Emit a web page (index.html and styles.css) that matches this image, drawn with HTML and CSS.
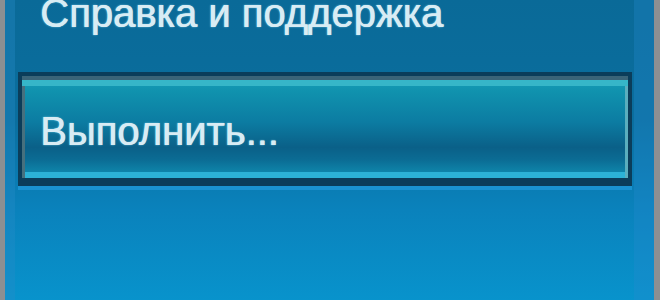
FILE: index.html
```html
<!DOCTYPE html>
<html lang="ru">
<head>
    <meta charset="UTF-8">
    <meta name="viewport" content="width=device-width, initial-scale=1.0">
    <title>Пуск</title>
    <link rel="stylesheet" href="styles.css">
</head>
<body>
    <div class="menu">
        <div class="item">Справка и поддержка</div>
        <div class="item item-hot">Выполнить...</div>
    </div>
</body>
</html>
```

FILE: styles.css
```css
html, body {
    margin: 0;
    height: 100%;
}
body {
    background-color: #8c8f92;
    font-family: "Liberation Sans", Arial, sans-serif;
    overflow: hidden;
}
.menu {
    display: flow-root;
    height: 300px;
    margin: 0 6px 0 5px;
    padding: 0 22px 0 13px;
    background: linear-gradient(to bottom, #0a6a98 0%, #0a6e9e 40%, #0a82bc 70%, #0893cc 100%);
    box-shadow: inset 10px 0 0 rgba(40, 140, 200, 0.35), inset -20px 0 0 rgba(40, 140, 210, 0.3);
}
.item {
    font-size: 40px;
    line-height: 40px;
    color: #d8ecf4;
    white-space: nowrap;
    text-shadow: 0.6px 0 0 #d8ecf4, 0 0 2px rgba(160, 230, 250, 0.7);
}
.menu > .item:first-child {
    margin-top: -7px;
    padding-left: 22px;
    margin-bottom: 39px;
}
.item-hot {
    border: 4px solid #0b3d5a;
    border-bottom-width: 8px;
    padding: 35px 0 27px 18px;
    background: linear-gradient(to bottom, #17a0b8 0%, #1092ae 15%, #0c7ca2 45%, #0a6088 70%, #0b6c94 82%, #1090b4 100%);
    box-shadow: inset 0 4px 0 #3a6478,
        inset 0 10px 0 #36b6c8,
        inset 3px 0 0 #46707e,
        inset -3px 0 0 #5aaebe,
        inset 0 -6px 0 #2cb2d6,
        0 4px 0 #1a92d0;
}
```
